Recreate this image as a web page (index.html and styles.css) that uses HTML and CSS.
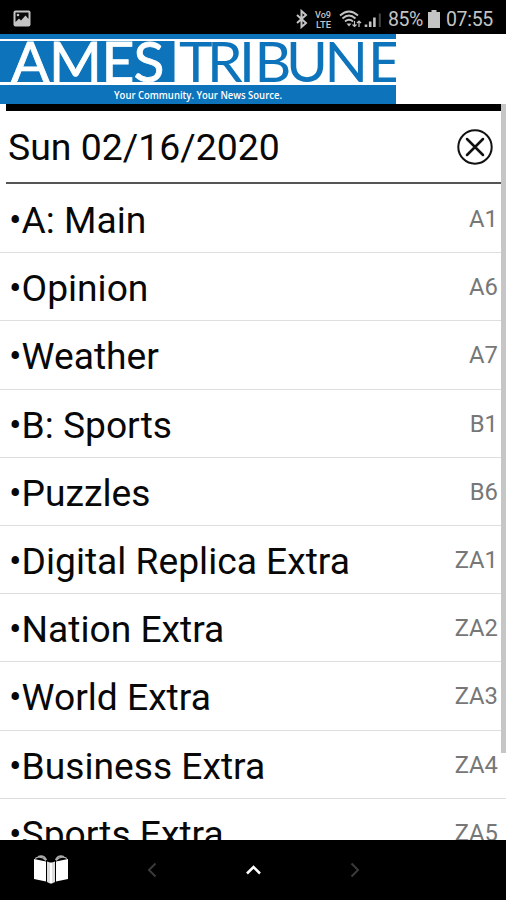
FILE: index.html
```
<!DOCTYPE html>
<html lang="en">
<head>
    <meta charset="UTF-8">
    <meta name="viewport" content="width=device-width, initial-scale=1.0">
    <title>Ames Tribune</title>
    <link rel="stylesheet" href="styles.css">
</head>
<body>
    <div class="status-bar">
        <svg class="picture-icon" width="18" height="17" viewBox="0 0 18 17">
            <rect x="0.5" y="0.5" width="17" height="16" rx="2" fill="#c4c4c4"/>
            <path d="M2.500 12V2.500h13V9l-3-3.500-4.500 5-2-2z" fill="#080808"/>
            <circle cx="5" cy="5" r="1.300" fill="#c4c4c4"/>
        </svg>
        <div class="status-right">
            <svg width="86" height="20" viewBox="297 8 86 20" fill="none" stroke="#c4c4c4">
                <path d="M298 14l9 8-4.500 4V10l4.500 4-9 8" stroke-width="2"/>
                <text class="volte" x="316" y="17" textLength="16" lengthAdjust="spacingAndGlyphs">Vo9</text>
                <text class="volte" x="317" y="26.500" textLength="15" lengthAdjust="spacingAndGlyphs">LTE</text>
                <path d="M341 14.500q9-8 18 0M343.500 17.500q6.500-6 13 0M346 20.500q4-3.500 8 0" stroke-width="1.800"/>
                <path d="M347.500 22.500h5l-2.500 3z" fill="#c4c4c4" stroke="none"/>
                <path d="M355.500 20v5.500m-2-2l2 2 2-2M360 26v-6m-2 2l2-2 2 2" stroke-width="1.200"/>
                <path d="M367 26v-2.500M371.200 26v-5.500M375.400 26v-9.500" stroke-width="2.600"/>
                <path d="M380.800 26V12.500" stroke="#444" stroke-width="2"/>
            </svg>
            <span class="battery-level">85%</span>
            <svg class="battery-icon" width="12" height="18" viewBox="0 0 12 18">
                <path d="M3.500 0h5v2H12v16H0V2h3.500z" fill="#c4c4c4"/>
            </svg>
            <span class="clock">07:55</span>
        </div>
    </div>

    <div class="masthead">
        <svg class="logo" width="396" height="70" viewBox="0 34 396 70">
            <rect y="34" width="396" height="70" fill="#0d74bb"/>
            <rect y="39" width="396" height="46" fill="#fff"/>
            <rect y="41" width="174.500" height="41" fill="#0d74bb"/>
            <text class="logo-name logo-ames" x="11 49 101.500 133.500" y="82">AMES</text>
            <text class="logo-name logo-tribune" x="179 207 239 254.500 286 324.500 368" y="82">TRIBUNE</text>
            <text class="logo-tagline" x="114" y="99" textLength="168" lengthAdjust="spacingAndGlyphs">Your Community. Your News Source.</text>
        </svg>
    </div>

    <div class="contents">
        <div class="date-header">
            <span>Sun 02/16/2020</span>
            <svg class="close-icon" width="36" height="36" viewBox="0 0 36 36">
                <circle cx="18" cy="18" r="16.700"/>
                <path d="M10 10l16 16M26 10L10 26"/>
            </svg>
        </div>
        <ul class="section-list">
            <li><span>•A: Main</span><span class="page">A1</span></li>
            <li><span>•Opinion</span><span class="page">A6</span></li>
            <li><span>•Weather</span><span class="page">A7</span></li>
            <li><span>•B: Sports</span><span class="page">B1</span></li>
            <li><span>•Puzzles</span><span class="page">B6</span></li>
            <li><span>•Digital Replica Extra</span><span class="page">ZA1</span></li>
            <li><span>•Nation Extra</span><span class="page">ZA2</span></li>
            <li><span>•World Extra</span><span class="page">ZA3</span></li>
            <li><span>•Business Extra</span><span class="page">ZA4</span></li>
            <li><span>•Sports Extra</span><span class="page">ZA5</span></li>
        </ul>
        <div class="scrollbar"></div>
    </div>

    <div class="bottom-nav">
        <div class="nav-item">
            <svg width="36" height="32" viewBox="0 0 36 32">
                <path d="M1 5l12 2.500v20L1 25zM35 5L23 7.500v20L35 25z" fill="#fff"/>
                <path d="M14 7.500l3 1v21l-3-1.500zM22 7.500l-3 1v21l3-1.500z" fill="#ddd"/>
                <path d="M17 8.500h2v21h-2z" fill="#fff"/>
                <path d="M2 4.500q6-3.500 11 2M5 2.500q6-2 8.500 3.500M34 4.500q-6-3.500-11 2M31 2.500q-6-2-8.500 3.500" fill="none" stroke="#aaa" stroke-width="1.300"/>
            </svg>
        </div>
        <div class="nav-item arrow disabled">
            <svg width="16" height="16" viewBox="0 0 16 16"><path d="M11.500 1.500L5 8l6.500 6.500"/></svg>
        </div>
        <div class="nav-item arrow">
            <svg width="16" height="16" viewBox="0 0 16 16"><path d="M2 11.500L8.500 5l6.500 6.500"/></svg>
        </div>
        <div class="nav-item arrow disabled">
            <svg width="16" height="16" viewBox="0 0 16 16"><path d="M5.500 1.500L12 8l-6.500 6.500"/></svg>
        </div>
        <div class="nav-item"></div>
    </div>
</body>
</html>
```
FILE: styles.css
```
* {
    box-sizing: border-box;
}

body {
    font-family: Roboto, sans-serif;
    margin: 0;
    height: 100vh;
    display: flex;
    flex-direction: column;
    overflow: hidden;
    background: #fff;
    color: #080808;
}

.status-bar {
    flex: none;
    height: 34px;
    padding: 4px 13px 0 13px;
    display: flex;
    justify-content: space-between;
    align-items: center;
    background: #000;
    color: #c4c4c4;
    font-size: 19.5px;
}

.picture-icon {
    margin-top: -2px;
}

.status-right {
    display: flex;
    align-items: center;
}

.volte {
    font-size: 9.5px;
    font-weight: 500;
    fill: #c4c4c4;
    stroke: none;
}

.battery-level {
    margin-left: 6px;
    letter-spacing: -0.4px;
}

.battery-icon {
    margin: 0 6px 0 5px;
}

.clock {
    letter-spacing: -0.3px;
}

.masthead {
    flex: none;
    height: 70px;
}

.logo {
    display: block;
}

.logo-name {
    font-family: Lato, sans-serif;
    font-size: 57px;
}

.logo-ames {
    fill: #fff;
    stroke: #fff;
    stroke-width: 0.8px;
}

.logo-tribune {
    fill: #0d74bb;
}

.logo-tagline {
    font-family: "Open Sans", sans-serif;
    font-size: 11.5px;
    font-weight: 600;
    fill: #fff;
}

.contents {
    position: relative;
    flex: 1;
    min-height: 0;
    overflow: hidden;
}

.date-header {
    display: flex;
    justify-content: space-between;
    align-items: center;
    height: 80px;
    margin: 0 5px 0 6px;
    padding: 0 8px 0 2px;
    border-top: 7px solid #000;
    border-bottom: 2px solid #555;
    font-size: 37.4px;
}

.date-header span {
    padding-top: 1px;
}

.close-icon {
    fill: none;
    stroke: #111;
    stroke-width: 2;
    stroke-linecap: round;
}

.close-icon path {
    stroke-width: 2.5;
}

.section-list {
    list-style: none;
    margin: 0;
    padding: 1px 0 0;
}

.section-list li {
    display: flex;
    justify-content: space-between;
    align-items: center;
    height: 68.2px;
    padding: 3px 8px 0 9px;
    border-bottom: 1.5px solid #dedede;
    font-size: 37.2px;
}

.section-list .page {
    margin-top: -2px;
    font-size: 23.8px;
    color: #777;
}

.scrollbar {
    position: absolute;
    top: 0;
    right: 0;
    width: 5px;
    height: 649px;
    background: #c6c6c6;
}

.bottom-nav {
    flex: none;
    display: grid;
    grid-template-columns: repeat(5, 1fr);
    height: 60px;
    background: #000;
}

.nav-item {
    display: flex;
    justify-content: center;
    align-items: center;
}

.arrow path {
    fill: none;
    stroke: #fff;
    stroke-width: 2.5;
}

.disabled path {
    stroke: #3a3a3a;
    stroke-width: 2;
}
```
